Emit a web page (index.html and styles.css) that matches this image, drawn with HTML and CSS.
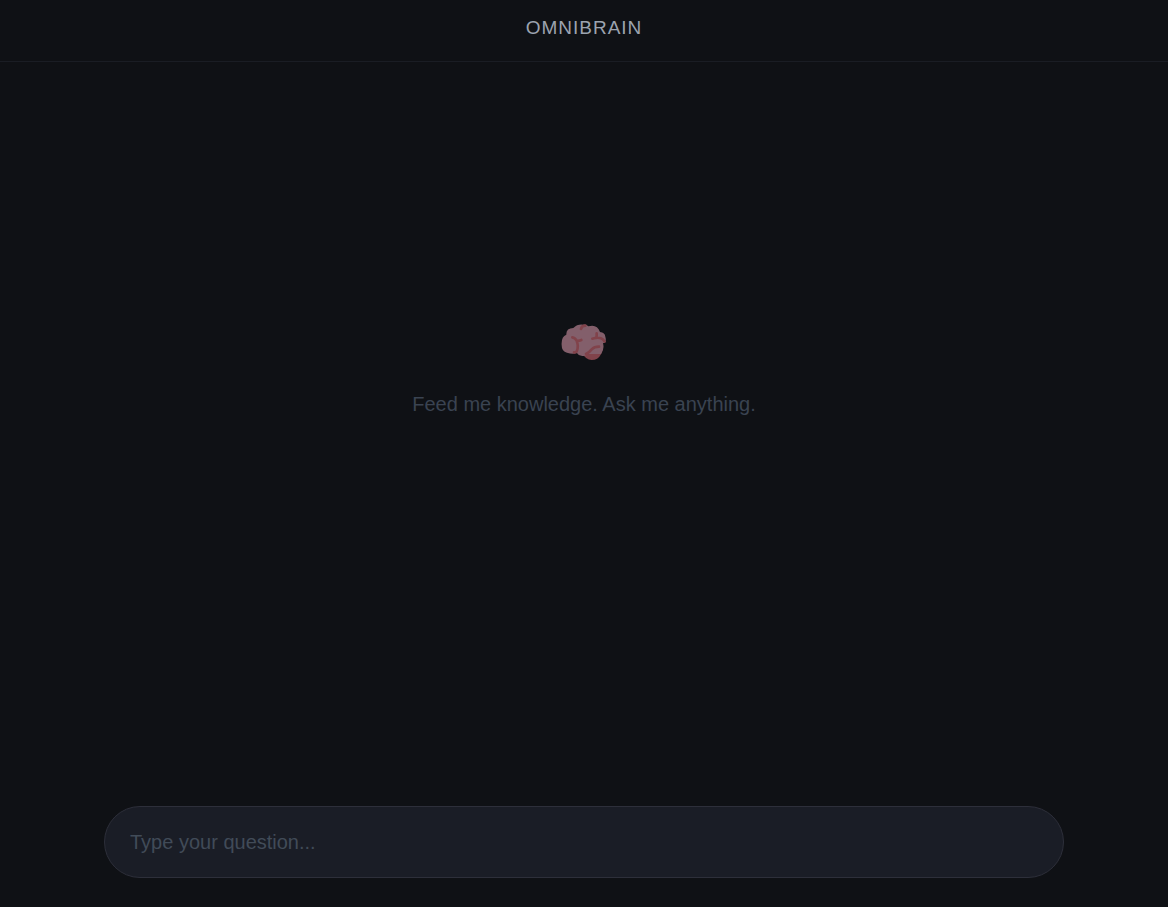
FILE: index.html
```html
<!DOCTYPE html>
<html lang="en">
<head>
    <meta charset="UTF-8">
    <meta name="viewport" content="width=device-width, initial-scale=1.0">
    <title>OmniBrain</title>
    <link rel="stylesheet" href="styles.css">
</head>
<body>
    <header class="header">
        <h1>OMNIBRAIN</h1>
    </header>

    <main class="chat">
        <div class="empty-state">
            <svg class="brain" viewBox="30 36 138 111" aria-hidden="true">
                <path class="brain-back" d="M94 124 Q104 144 122 144 Q141 144 149 128 Q156 118 155 101 L126 96 Z"/>
                <path class="brain-main" d="M46 68 Q45 48 67 48 Q79 36 96 38 Q106 36 112 43 Q138 35 147 60 Q162 62 163 74 Q168 90 156 94 Q161 111 150 126 L108 126 Q104 135 91 131 Q82 130 77 122 Q67 128 48 122 Q32 119 32 100 Q30 74 46 68 Z"/>
                <path class="brain-fold" d="M90 51 Q92 41 103 41"/>
                <path class="brain-fold" d="M64 76 Q72 77 77 86 Q84 87 91 84 M77 86 Q84 104 77 118 Q74 122 69 121"/>
                <path class="brain-fold" d="M124 80 Q140 75 150 79 Q157 81 161 89 M137 64 Q138 72 135 78"/>
                <path class="brain-fold" d="M105 126 Q115 121 122 112 Q130 104 144 104"/>
            </svg>
            <p>Feed me knowledge. Ask me anything.</p>
        </div>
    </main>

    <form class="input-bar">
        <input type="text" id="question" aria-label="Your question" placeholder="Type your question..." autocomplete="off">
    </form>

    <script>
        document.querySelector('.input-bar').addEventListener('submit', function(e) {
            e.preventDefault();
        });
    </script>
</body>
</html>
```
FILE: styles.css
```css
* {
    box-sizing: border-box;
    margin: 0;
    padding: 0;
}
body {
    display: flex;
    flex-direction: column;
    min-height: 100vh;
    font-family: "Liberation Sans", Arial, sans-serif;
    background-color: #0f1115;
    color: #9ca3af;
}
.header {
    padding: 16px 24px 21px;
    border-bottom: 1px solid #1a1d24;
    text-align: center;
}
h1 {
    font-size: 19px;
    line-height: 24px;
    font-weight: 500;
    letter-spacing: 1px;
}
.chat {
    flex: 1;
    display: flex;
    justify-content: center;
    padding: 262px 24px 24px;
}
.empty-state {
    display: flex;
    flex-direction: column;
    align-items: center;
    gap: 31px;
    color: #3a4351;
    font-size: 20px;
    line-height: 24px;
    text-align: center;
}
.brain {
    width: 46px;
    height: 37px;
}
.brain-main {
    fill: #835f6b;
}
.brain-back {
    fill: #81434b;
}
.brain-fold {
    fill: none;
    stroke: #81434b;
    stroke-width: 8;
    stroke-linecap: round;
    stroke-linejoin: round;
}
.input-bar {
    padding: 0 24px 29px;
}
.input-bar input {
    display: block;
    width: 100%;
    max-width: 960px;
    height: 72px;
    margin: 0 auto;
    padding: 0 25px;
    border: 1px solid #2d2f3a;
    border-radius: 36px;
    background-color: #1a1d26;
    color: #e5e7eb;
    font-family: inherit;
    font-size: 20px;
    outline: none;
}
.input-bar input::placeholder {
    color: #414b58;
}
.input-bar input:focus {
    border-color: #4b5563;
}
```
